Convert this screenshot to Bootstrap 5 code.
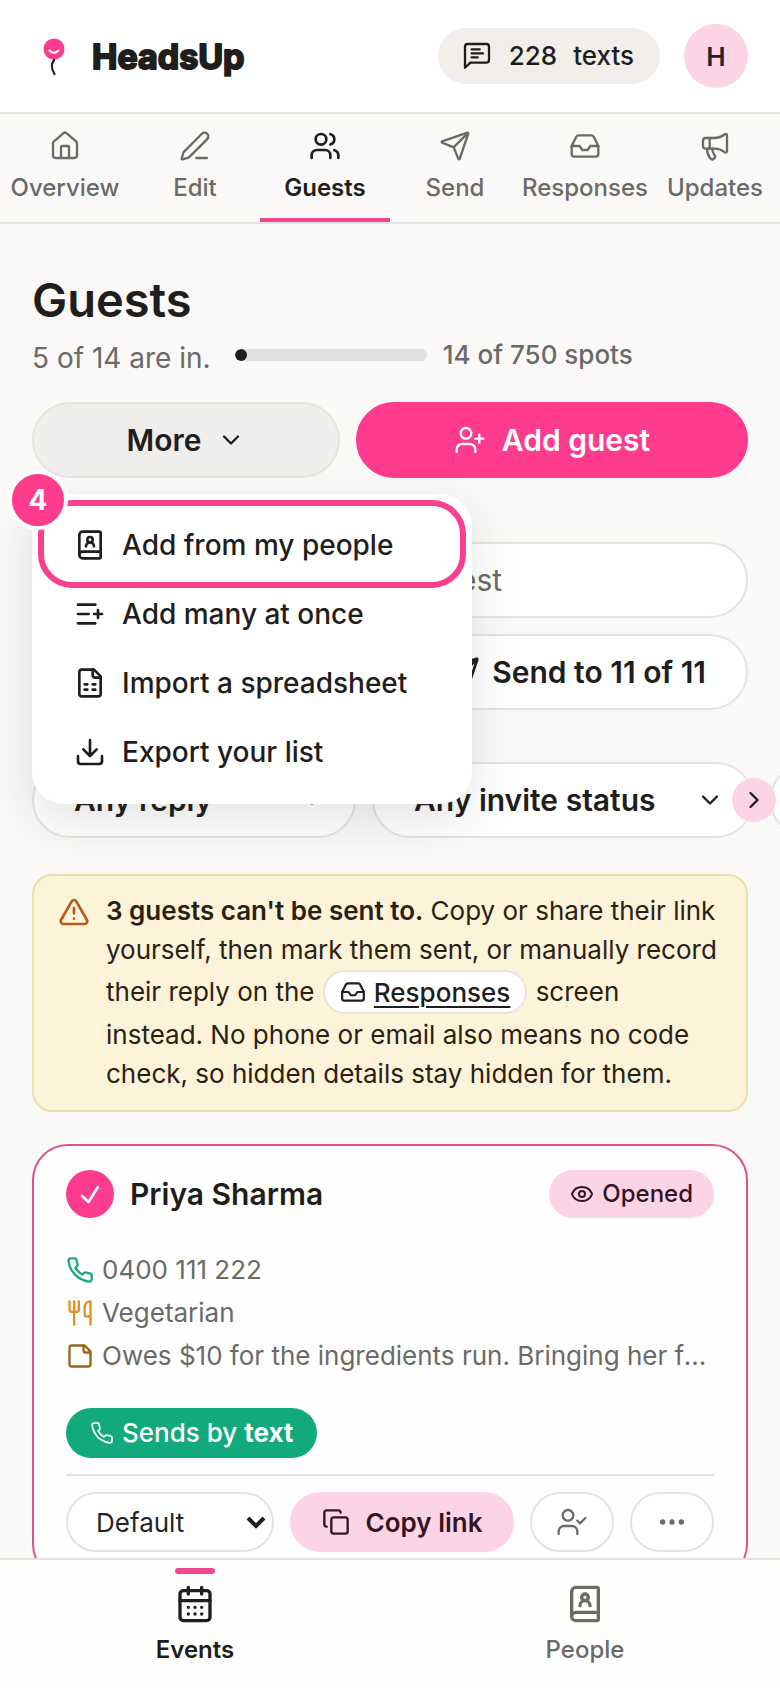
<!DOCTYPE html>
<html lang="en">
<head>
<meta charset="utf-8">
<meta name="viewport" content="width=device-width, initial-scale=1">
<title>HeadsUp – Guests</title>
<link href="https://cdn.jsdelivr.net/npm/bootstrap@5.3.0/dist/css/bootstrap.min.css" rel="stylesheet">
<style>
  :root { --ink: #1f1e1c; --soft: #6b6a66; --line: #e4e3df; --pink: #ff3b8d; --blush: #fdd3e6; --paper: #faf9f8; }
  body { font-family: Inter, "Liberation Sans", sans-serif; font-optical-sizing: none; font-size: 26px; line-height: 40px; color: var(--ink); background: var(--paper); overflow-x: hidden; }
  svg { fill: none; stroke: currentColor; stroke-width: 2; stroke-linecap: round; stroke-linejoin: round; flex: none; display: block; }
  .thin { stroke-width: 1.75; }
  .ic-24 { width: 24px; height: 24px; } .ic-26 { width: 26px; height: 26px; }
  .ic-28 { width: 28px; height: 28px; } .ic-32 { width: 32px; height: 32px; } .ic-40 { width: 40px; height: 40px; }
  .fw-med { font-weight: 500; }
  .muted { color: var(--soft); }
  .gap-24 { gap: 24px; }
  .gap-16 { gap: 16px; }
  .gap-8 { gap: 8px; }
  a { color: inherit; text-decoration: none; }
  button, select { color: inherit; }

  .topbar { height: 114px; padding: 0 32px; background: #fff; border-bottom: 2px solid var(--line); }
  .brand-name { width: 160px; height: 44px; overflow: visible; }
  .brand-name text { font-weight: 700; font-size: 34px; fill: var(--ink); stroke: var(--ink); stroke-width: 2; }
  .logo-mark { width: 44px; height: 44px; }
  .credit { height: 56px; padding: 0 26px 0 23px; background: #f2efeb; border-radius: 28px; gap: 16px; }
  .avatar { width: 64px; height: 64px; background: var(--blush); font-size: 26px; font-weight: 600; }

  .tabs { display: grid; grid-template-columns: repeat(6, minmax(0, 1fr)); height: 110px; border-bottom: 2px solid var(--line); }
  .tabs a { display: flex; flex-direction: column; align-items: center; padding-top: 16px; gap: 8px; font-size: 24px; line-height: 36px; font-weight: 500; color: var(--soft); white-space: nowrap; border-bottom: 4px solid transparent; }
  .tabs a.active { color: var(--ink); font-weight: 600; border-color: #ef4690; }

  .page-body { padding: 48px 32px 0; }
  h1 { font-size: 47px; line-height: 56px; font-weight: 600; margin: 0; }
  .summary { height: 50px; gap: 24px; padding-top: 4px; margin-bottom: 24px; }
  .going { font-size: 28px; padding-top: 6px; }
  .meter { width: 192px; height: 12px; border-radius: 6px; background: #e0e0de; }
  .meter .progress-bar { background: var(--ink); border-radius: 6px; min-width: 12px; }
  .pill { height: 76px; border-radius: 38px; border: 2px solid var(--line); font-size: 30px; font-weight: 600; line-height: 40px; display: flex; align-items: center; justify-content: center; gap: 16px; background-color: #fff; color: var(--ink); }
  .pill-more, .pill-more:hover { background: #efeeec; width: 100%; padding: 0; }
  .pill-add, .pill-add:hover { background: var(--pink); border-color: var(--pink); color: #fff; }
  .actions { display: grid; grid-template-columns: 308fr 392fr; gap: 16px; }

  .menu { position: absolute; top: 92px; left: 0; width: 440px; padding: 16px 0 18px; margin: 0; list-style: none; background: #fff; border-radius: 32px; box-shadow: 0 16px 48px rgba(40, 36, 30, .13); z-index: 5; }
  .menu li { position: relative; }
  .menu button { display: flex; width: 100%; height: 69px; align-items: center; gap: 16px; padding: 0 42px; border: 0; background: none; font-size: 28px; font-weight: 500; }
  .ring { position: absolute; inset: -10px 6px -9px; border: 6px solid #f8408e; border-radius: 34px; pointer-events: none; }
  .step { position: absolute; left: -24px; top: -40px; width: 60px; height: 60px; border: 4px solid #fff; border-radius: 50%; background: var(--pink); color: #fff; font-weight: 700; font-size: 28px; pointer-events: none; }

  .search { margin-top: 64px; width: 100%; padding: 0 40px 0 294px; font-weight: 400; }
  .search::placeholder { color: var(--soft); opacity: 1; }
  .send-btn { padding: 0 40px; gap: 12px; }
  .filters { margin: 52px -32px 0 0; gap: 16px; overflow: hidden; }
  .filters .form-select { flex: none; padding: 0 80px 0 40px; background-size: 28px; background-position: right 28px center; --bs-form-select-bg-img: url("data:image/svg+xml,%3csvg xmlns='http://www.w3.org/2000/svg' viewBox='0 0 24 24'%3e%3cpath d='m6 9 6 6 6-6' fill='none' stroke='%231f1e1c' stroke-width='2' stroke-linecap='round' stroke-linejoin='round'/%3e%3c/svg%3e"); }
  .w-reply { width: 324px; } .w-invite { width: 382px; } .w-group { width: 300px; }
  .next { position: absolute; right: -28px; top: 16px; width: 44px; height: 44px; border: 0; padding: 8px; background: var(--blush); border-radius: 50%; }

  .notice { margin-top: 36px; padding: 15px 24px 17px; gap: 16px; border: 2px solid #eadfac; border-radius: 20px; background: #fdf3d8; color: #2a2114; line-height: 39px; }
  .notice > svg { color: #b45a1c; margin-top: 5px; }
  .notice b { font-weight: 600; }
  .chip { display: inline-flex; align-items: center; gap: 8px; height: 44px; padding: 0 15px; margin: 1px; border: 2px solid #e6e4de; border-radius: 22px; background: #fff; color: var(--ink); font-weight: 500; vertical-align: -4px; }
  .chip span { text-decoration: underline; text-decoration-thickness: 2px; text-underline-offset: 4px; }

  .guest { margin-top: 32px; padding: 24px 32px 26px; border: 2px solid #e0508f; border-radius: 36px; background: #fefefe; }
  .tick { width: 48px; height: 48px; border: 0; padding: 12px; background: var(--pink); color: #fff; border-radius: 50%; }
  .guest h2 { font-size: 30px; line-height: 40px; font-weight: 600; margin: 0; }
  .opened { height: 48px; padding: 0 21px; border-radius: 24px; background: var(--blush); color: #331522; font-size: 24px; font-weight: 500; }
  .facts { margin: 30px 0 0; padding: 0; list-style: none; line-height: 43px; color: var(--soft); }
  .i-phone { color: #1fa87c; } .i-food { color: #e0921f; } .i-note { color: #94661a; }
  .by-text { display: inline-flex; height: 50px; padding: 0 24px; margin-top: 31px; border-radius: 25px; background: #12a97c; color: #fff; font-weight: 500; }
  .guest hr { margin: 16px 0; border-top: 2px solid var(--line); opacity: 1; }
  .tools .btn, .tools .form-select { height: 60px; border-radius: 30px; border: 2px solid var(--line); font-size: 26px; display: flex; align-items: center; justify-content: center; background-color: #fff; padding: 0; }
  .tools .form-select { flex: 0 0 208px; padding: 0 40px 0 28px; background-size: 24px; background-position: right 4px center; --bs-form-select-bg-img: url("data:image/svg+xml,%3csvg xmlns='http://www.w3.org/2000/svg' viewBox='0 0 24 24'%3e%3cpath d='m4 8 8 8 8-8' fill='none' stroke='%231f1e1c' stroke-width='4'/%3e%3c/svg%3e"); }
  .tools .copy-btn { flex: 1; gap: 16px; background: var(--blush); border-color: var(--blush); color: #331522; font-weight: 600; }
  .tools .icon-btn { flex: 0 0 84px; color: var(--soft); }

  .dock { height: 130px; background: #fefefd; border-top: 2px solid var(--line); display: grid; grid-template-columns: 1fr 1fr; }
  .dock a { display: flex; flex-direction: column; align-items: center; padding-top: 8px; gap: 10px; font-size: 24px; line-height: 32px; font-weight: 500; color: var(--soft); }
  .dock a::before { content: ""; width: 40px; height: 6px; border-radius: 3px; }
  .dock a.active { color: var(--ink); font-weight: 600; }
  .dock a.active::before { background: #f0468f; }
</style>
</head>
<body>
<header class="topbar d-flex align-items-center justify-content-between">
  <a href="#" class="d-flex align-items-center gap-16">
    <svg class="logo-mark" viewBox="0 0 44 44"><circle cx="22" cy="15" r="10.5" fill="#ff3b8d" stroke="none"/><path d="M17.500 16.500q4.500 4.500 9 0" stroke="#fff" stroke-width="2"/><path d="M22 26q-4.500 6 0.500 14" stroke="#1f1e1c" stroke-width="2.200"/></svg>
    <svg class="brand-name"><text x="0" y="35">HeadsUp</text></svg>
  </a>
  <div class="d-flex align-items-center gap-24">
    <a href="#" class="credit d-flex align-items-center fw-med"><svg class="ic-32 thin" viewBox="0 0 24 24"><path d="M21 15a2 2 0 0 1-2 2H7l-4 3.800V5a2 2 0 0 1 2-2h14a2 2 0 0 1 2 2zM8 7h6M8 10h8.500M8 13h4.500"/></svg><span>228</span><span>texts</span></a>
    <button class="avatar btn rounded-circle p-0" type="button">H</button>
  </div>
</header>

<nav class="tabs">
  <a href="#"><svg class="ic-32 thin" viewBox="0 0 24 24"><path d="M15 21v-8a1 1 0 0 0-1-1h-4a1 1 0 0 0-1 1v8"/><path d="M3 10a2 2 0 0 1 .709-1.528l7-6a2 2 0 0 1 2.582 0l7 6A2 2 0 0 1 21 10v9a2 2 0 0 1-2 2H5a2 2 0 0 1-2-2z"/></svg>Overview</a>
  <a href="#"><svg class="ic-32 thin" viewBox="0 0 24 24"><path d="M13 21h8"/><path d="M21.174 6.812a1 1 0 0 0-3.986-3.987L3.842 16.174a2 2 0 0 0-.5.830l-1.321 4.352a.5.5 0 0 0 .623.622l4.353-1.320a2 2 0 0 0 .830-.497z"/></svg>Edit</a>
  <a href="#" class="active" aria-current="page"><svg class="ic-32" viewBox="0 0 24 24"><path d="M16 21v-2a4 4 0 0 0-4-4H6a4 4 0 0 0-4 4v2"/><circle cx="9" cy="7" r="4"/><path d="M22 21v-2a4 4 0 0 0-3-3.870M16 3.130a4 4 0 0 1 0 7.750"/></svg>Guests</a>
  <a href="#"><svg class="ic-32 thin" viewBox="0 0 24 24"><path d="M14.536 21.686a.5.5 0 0 0 .937-.024l6.500-19a.496.496 0 0 0-.635-.635l-19 6.500a.5.5 0 0 0-.024.937l7.930 3.180a2 2 0 0 1 1.112 1.110zM21.854 2.147l-10.940 10.939"/></svg>Send</a>
  <a href="#"><svg class="ic-32 thin" viewBox="0 0 24 24"><path d="M22 12h-6l-2 3h-4l-2-3H2"/><path d="M5.450 5.110 2 12v6a2 2 0 0 0 2 2h16a2 2 0 0 0 2-2v-6l-3.450-6.890A2 2 0 0 0 16.760 4H7.240a2 2 0 0 0-1.790 1.110z"/></svg>Responses</a>
  <a href="#"><svg class="ic-32 thin" viewBox="0 0 24 24"><path d="M11 6a13 13 0 0 0 8.400-2.800A1 1 0 0 1 21 4v12a1 1 0 0 1-1.600.8A13 13 0 0 0 11 14H5a2 2 0 0 1-2-2V8a2 2 0 0 1 2-2z"/><path d="M6 14a12 12 0 0 0 2.400 7.200 2 2 0 0 0 3.200-2.400A8 8 0 0 1 10 14M8 6v8"/></svg>Updates</a>
</nav>

<main class="page-body">
  <h1>Guests</h1>
  <div class="summary d-flex align-items-center muted">
    <span class="going">5 of 14 are in.</span>
    <div class="d-flex align-items-center gap-16 fw-med">
      <div class="meter progress" role="progressbar" aria-label="Spots used" aria-valuenow="14" aria-valuemin="0" aria-valuemax="750"><div class="progress-bar" style="width:2%"></div></div>
      <span>14 of 750 spots</span>
    </div>
  </div>

  <div class="actions">
    <div class="position-relative">
      <button class="pill pill-more" type="button" aria-expanded="true">More <svg class="ic-28" viewBox="0 0 24 24"><path d="m6 9 6 6 6-6"/></svg></button>
      <ul class="menu">
        <li>
          <button type="button"><svg class="ic-32" viewBox="0 0 24 24"><path d="M15 13a3 3 0 1 0-6 0"/><path d="M4 19.500v-15A2.500 2.500 0 0 1 6.500 2H19a1 1 0 0 1 1 1v18a1 1 0 0 1-1 1H6.500a1 1 0 0 1 0-5H20"/><circle cx="12" cy="8" r="2"/></svg>Add from my people</button>
          <span class="ring"></span><span class="step d-flex align-items-center justify-content-center">4</span>
        </li>
        <li><button type="button"><svg class="ic-32" viewBox="0 0 24 24"><path d="M16 5H3M11 12H3M16 19H3M18 9v6M21 12h-6"/></svg>Add many at once</button></li>
        <li><button type="button"><svg class="ic-32" viewBox="0 0 24 24"><path d="M15 2H6a2 2 0 0 0-2 2v16a2 2 0 0 0 2 2h12a2 2 0 0 0 2-2V7z"/><path d="M14 2v4a2 2 0 0 0 2 2h4M8 13h2M14 13h2M8 17h2M14 17h2"/></svg>Import a spreadsheet</button></li>
        <li><button type="button"><svg class="ic-32" viewBox="0 0 24 24"><path d="M12 15V3M21 15v4a2 2 0 0 1-2 2H5a2 2 0 0 1-2-2v-4M7 10l5 5 5-5"/></svg>Export your list</button></li>
      </ul>
    </div>
    <button class="pill pill-add" type="button"><svg class="ic-32 thin" viewBox="0 0 24 24"><path d="M16 21v-2a4 4 0 0 0-4-4H6a4 4 0 0 0-4 4v2"/><circle cx="9" cy="7" r="4"/><path d="M19 8v6M22 11h-6"/></svg>Add guest</button>
  </div>

  <input class="pill search d-block" type="search" placeholder="Find a guest" aria-label="Find a guest">
  <div class="d-flex justify-content-end mt-3">
    <button class="pill send-btn" type="button"><svg class="ic-32" viewBox="0 0 24 24"><path d="M14.536 21.686a.5.5 0 0 0 .937-.024l6.500-19a.496.496 0 0 0-.635-.635l-19 6.500a.5.5 0 0 0-.024.937l7.930 3.180a2 2 0 0 1 1.112 1.110zM21.854 2.147l-10.940 10.939"/></svg>Send to 11 of 11</button>
  </div>

  <div class="position-relative">
    <div class="filters d-flex">
      <select class="pill form-select w-reply" aria-label="Reply"><option>Any reply</option></select>
      <select class="pill form-select w-invite" aria-label="Invite status"><option>Any invite status</option></select>
      <select class="pill form-select w-group" aria-label="Group"><option></option></select>
    </div>
    <button class="next" type="button" aria-label="More filters"><svg class="ic-28" viewBox="0 0 24 24"><path d="m9 18 6-6-6-6"/></svg></button>
  </div>

  <section class="notice d-flex align-items-start">
    <svg class="ic-32" viewBox="0 0 24 24"><path d="m21.730 18-8-14a2 2 0 0 0-3.480 0l-8 14A2 2 0 0 0 4 21h16a2 2 0 0 0 1.730-3M12 9v4M12 17h.01"/></svg>
    <div><b>3 guests can't be sent to.</b> Copy or share their link yourself, then mark them sent, or manually record their reply on the <a href="#" class="chip"><svg class="ic-26" viewBox="0 0 24 24"><path d="M22 12h-6l-2 3h-4l-2-3H2"/><path d="M5.450 5.110 2 12v6a2 2 0 0 0 2 2h16a2 2 0 0 0 2-2v-6l-3.450-6.890A2 2 0 0 0 16.760 4H7.240a2 2 0 0 0-1.790 1.110z"/></svg><span>Responses</span></a> screen instead. No phone or email also means no code check, so hidden details stay hidden for them.</div>
  </section>

  <article class="guest">
    <div class="d-flex align-items-center gap-16">
      <button class="tick" type="button" aria-label="Selected"><svg class="ic-24" viewBox="0 0 24 24"><path d="M20 5 10.500 20 4 14" stroke-width="2.600"/></svg></button>
      <h2 class="me-auto">Priya Sharma</h2>
      <span class="opened d-flex align-items-center gap-8"><svg class="ic-24" viewBox="0 0 24 24"><path d="M2.062 12.348a1 1 0 0 1 0-.696 10.750 10.750 0 0 1 19.876 0 1 1 0 0 1 0 .696 10.750 10.750 0 0 1-19.876 0"/><circle cx="12" cy="12" r="3"/></svg>Opened</span>
    </div>
    <ul class="facts">
      <li class="d-flex align-items-center gap-8"><svg class="ic-28 i-phone" viewBox="0 0 24 24"><path d="M22 16.920v3a2 2 0 0 1-2.180 2 19.790 19.790 0 0 1-8.630-3.070 19.500 19.500 0 0 1-6-6 19.790 19.790 0 0 1-3.070-8.670A2 2 0 0 1 4.110 2h3a2 2 0 0 1 2 1.720 12.840 12.840 0 0 0 .7 2.810 2 2 0 0 1-.45 2.110L8.090 9.910a16 16 0 0 0 6 6l1.270-1.270a2 2 0 0 1 2.110-.45 12.840 12.840 0 0 0 2.810.7A2 2 0 0 1 22 16.920z"/></svg>0400 111 222</li>
      <li class="d-flex align-items-center gap-8"><svg class="ic-28 i-food" viewBox="0 0 24 24"><path d="M3 2v7c0 1.100.9 2 2 2h4a2 2 0 0 0 2-2V2M7 2v20M21 15V2a5 5 0 0 0-5 5v6c0 1.100.9 2 2 2h3zm0 0v7"/></svg>Vegetarian</li>
      <li class="d-flex align-items-center gap-8"><svg class="ic-28 i-note" viewBox="0 0 24 24"><path d="M16 3H5a2 2 0 0 0-2 2v14a2 2 0 0 0 2 2h14a2 2 0 0 0 2-2V8zM15 3v4a2 2 0 0 0 2 2h4"/></svg><span class="text-truncate">Owes $10 for the ingredients run. Bringing her famous salad.</span></li>
    </ul>
    <div class="by-text align-items-center gap-8"><svg class="ic-24 thin" viewBox="0 0 24 24"><path d="M22 16.920v3a2 2 0 0 1-2.180 2 19.790 19.790 0 0 1-8.630-3.070 19.500 19.500 0 0 1-6-6 19.790 19.790 0 0 1-3.070-8.670A2 2 0 0 1 4.110 2h3a2 2 0 0 1 2 1.720 12.840 12.840 0 0 0 .7 2.810 2 2 0 0 1-.45 2.110L8.090 9.910a16 16 0 0 0 6 6l1.270-1.270a2 2 0 0 1 2.110-.45 12.840 12.840 0 0 0 2.810.7A2 2 0 0 1 22 16.920z"/></svg><span>Sends by <b>text</b></span></div>
    <hr>
    <div class="tools d-flex gap-16">
      <select class="form-select" aria-label="Invite version"><option>Default</option></select>
      <button class="btn copy-btn" type="button"><svg class="ic-28" viewBox="0 0 24 24"><rect x="8" y="8" width="14" height="14" rx="2"/><path d="M4 16c-1.100 0-2-.9-2-2V4c0-1.100.9-2 2-2h10c1.100 0 2 .9 2 2"/></svg>Copy link</button>
      <button class="btn icon-btn" type="button" aria-label="Record reply"><svg class="ic-32 thin" viewBox="0 0 24 24"><path d="M16 21v-2a4 4 0 0 0-4-4H6a4 4 0 0 0-4 4v2"/><circle cx="9" cy="7" r="4"/><path d="m16 11 2 2 4-4"/></svg></button>
      <button class="btn icon-btn" type="button" aria-label="More actions"><svg class="ic-28" viewBox="0 0 24 24"><g fill="currentColor"><circle cx="4" cy="12" r="1.300"/><circle cx="12" cy="12" r="1.300"/><circle cx="20" cy="12" r="1.300"/></g></svg></button>
    </div>
  </article>
</main>

<nav class="dock fixed-bottom">
  <a href="#" class="active" aria-current="page"><svg class="ic-40" viewBox="0 0 24 24"><path d="M8 2v4M16 2v4M3 10h18M8 14h.01M12 14h.01M16 14h.01M8 18h.01M12 18h.01M16 18h.01"/><rect x="3" y="4" width="18" height="18" rx="2"/></svg>Events</a>
  <a href="#"><svg class="ic-40" viewBox="0 0 24 24"><path d="M15 13a3 3 0 1 0-6 0"/><path d="M4 19.500v-15A2.500 2.500 0 0 1 6.500 2H19a1 1 0 0 1 1 1v18a1 1 0 0 1-1 1H6.500a1 1 0 0 1 0-5H20"/><circle cx="12" cy="8" r="2"/></svg>People</a>
</nav>
<script src="https://cdn.jsdelivr.net/npm/bootstrap@5.3.0/dist/js/bootstrap.bundle.min.js"></script>
</body>
</html>
